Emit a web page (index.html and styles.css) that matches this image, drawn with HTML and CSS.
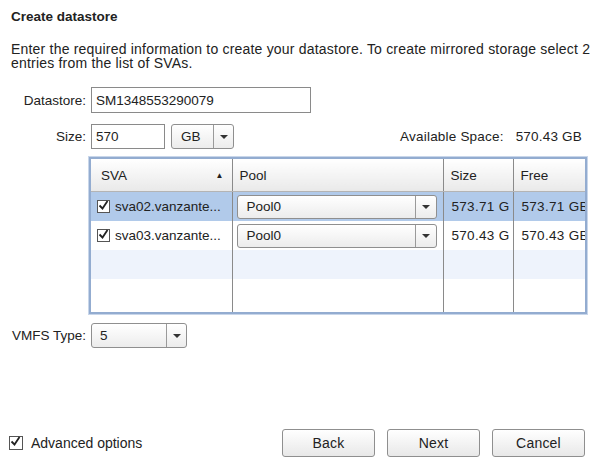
FILE: index.html
```html
<!DOCTYPE html>
<html>
<head>
<meta charset="utf-8">
<link rel="stylesheet" href="styles.css">
</head>
<body>
<div class="page">
  <h1 class="title">Create datastore</h1>
  <p class="desc">Enter the required information to create your datastore. To create mirrored storage select 2 entries from the list of SVAs.</p>

  <div class="row row-ds">
    <label class="lbl">Datastore:</label>
    <div class="input input-ds">SM1348553290079</div>
  </div>

  <div class="row row-size">
    <label class="lbl">Size:</label>
    <div class="input input-size">570</div>
    <div class="combo combo-gb"><span class="combo-text">GB</span><span class="combo-btn"><span class="arrow"></span></span></div>
    <div class="avail">Available Space:<span class="avail-val">570.43 GB</span></div>
  </div>

  <div class="grid-wrap">
    <table class="grid">
      <colgroup>
        <col class="c-sva"><col class="c-pool"><col class="c-size"><col class="c-free">
      </colgroup>
      <thead>
        <tr>
          <th><div class="th-in"><span>SVA</span><span class="sort">&#9650;</span></div></th>
          <th>Pool</th>
          <th>Size</th>
          <th>Free</th>
        </tr>
      </thead>
      <tbody>
        <tr class="sel">
          <td><span class="cb"><svg viewBox="0 0 13 13" width="13" height="13"><path d="M2.5 6.5 L5.5 9.5 L10.5 2" fill="none" stroke="#222" stroke-width="1.8"/></svg></span>sva02.vanzante...</td>
          <td><div class="combo combo-pool"><span class="combo-text">Pool0</span><span class="combo-btn"><span class="arrow"></span></span></div></td>
          <td class="num">573.71 G</td>
          <td class="num">573.71 GB</td>
        </tr>
        <tr>
          <td><span class="cb"><svg viewBox="0 0 13 13" width="13" height="13"><path d="M2.5 6.5 L5.5 9.5 L10.5 2" fill="none" stroke="#222" stroke-width="1.8"/></svg></span>sva03.vanzante...</td>
          <td><div class="combo combo-pool"><span class="combo-text">Pool0</span><span class="combo-btn"><span class="arrow"></span></span></div></td>
          <td class="num">570.43 G</td>
          <td class="num">570.43 GB</td>
        </tr>
        <tr class="alt"><td></td><td></td><td></td><td></td></tr>
        <tr class="fill"><td></td><td></td><td></td><td></td></tr>
      </tbody>
    </table>
  </div>

  <div class="row row-vmfs">
    <label class="lbl-vmfs">VMFS Type:</label>
    <div class="combo combo-vmfs"><span class="combo-text">5</span><span class="combo-btn"><span class="arrow"></span></span></div>
  </div>

  <div class="footer">
    <label class="adv"><span class="cb"><svg viewBox="0 0 13 13" width="13" height="13"><path d="M2.5 6.5 L5.5 9.5 L10.5 2" fill="none" stroke="#222" stroke-width="1.8"/></svg></span>Advanced options</label>
    <div class="buttons">
      <button class="btn">Back</button>
      <button class="btn">Next</button>
      <button class="btn">Cancel</button>
    </div>
  </div>
</div>
</body>
</html>
```

FILE: styles.css
```css
html, body {
  margin: 0;
  padding: 0;
  background: #ffffff;
}
body {
  font-family: "Liberation Sans", Arial, sans-serif;
  font-size: 13.5px;
  color: #222;
  width: 600px;
  height: 466px;
  overflow: hidden;
}
.page {
  padding: 8px 10px 0 11px;
  position: relative;
  height: 466px;
  box-sizing: border-box;
}
.title {
  font-size: 13.5px;
  font-weight: bold;
  margin: 0;
  line-height: 17px;
}
.desc {
  margin: 17px 0 0 0;
  font-size: 14px;
  letter-spacing: 0.2px;
  line-height: 14px;
  width: 585px;
}
.row {
  display: flex;
  align-items: center;
}
.row-ds {
  margin-top: 17px;
  height: 26px;
}
.lbl {
  width: 75px;
  text-align: right;
  margin-right: 5px;
}
.input {
  border: 1px solid #8a8a8a;
  box-sizing: border-box;
  background: #fff;
  padding-left: 4px;
  display: flex;
  align-items: center;
}
.input-ds {
  width: 220px;
  height: 26px;
}
.row-size {
  margin-top: 11px;
  height: 25px;
}
.input-size {
  width: 74px;
  height: 25px;
}
.combo {
  display: flex;
  box-sizing: border-box;
  border: 1px solid #8f8f8f;
  border-radius: 3px;
  background: linear-gradient(#ffffff, #ececec);
  align-items: stretch;
}
.combo-text {
  flex: 1;
  display: flex;
  align-items: center;
  padding-left: 9px;
}
.combo-btn {
  width: 19px;
  border-left: 1px solid #9a9a9a;
  display: flex;
  align-items: center;
  justify-content: center;
}
.arrow {
  width: 0;
  height: 0;
  border-left: 4px solid transparent;
  border-right: 4px solid transparent;
  border-top: 4px solid #333;
}
.combo-gb {
  width: 63px;
  height: 25px;
  margin-left: 6px;
}
.combo-gb .combo-text {
  padding-left: 9px;
}
.avail {
  margin-left: auto;
  margin-right: 8px;
  letter-spacing: 0.2px;
}
.avail-val {
  margin-left: 12px;
}
.grid-wrap {
  margin: 8px 0 0 78px;
  width: 498px;
  height: 157px;
  box-sizing: border-box;
  border: 2px solid #93acd0;
  box-shadow: 0 0 0 1px #c8d6ea;
  overflow: hidden;
  background: #fff;
}
.grid {
  border-collapse: collapse;
  table-layout: fixed;
  width: 494px;
  height: 153px;
}
.c-sva { width: 141px; }
.c-pool { width: 211px; }
.c-size { width: 70px; }
.c-free { width: 72px; }
.grid th {
  height: 32px;
  font-weight: normal;
  text-align: left;
  padding: 0 0 0 7px;
  background: linear-gradient(#ffffff, #e9e9e9);
  border-right: 1px solid #8a8a8a;
  border-bottom: 1px solid #b4b4b4;
  white-space: nowrap;
}
.grid th:first-child {
  padding-left: 10px;
  padding-right: 8px;
}
.th-in {
  display: flex;
  justify-content: space-between;
  align-items: center;
}
.sort {
  font-size: 8px;
  color: #222;
}
.grid th:last-child, .grid td:last-child {
  border-right: none;
}
.grid td {
  height: 29px;
  padding: 0 0 0 4px;
  border-right: 1px solid #8a8a8a;
  white-space: nowrap;
  overflow: hidden;
  vertical-align: middle;
}
.grid td:first-child {
  padding-left: 6px;
}
.grid tr.sel td {
  background: #b1caea;
}
.grid tr.alt td {
  background: #eef3fc;
}
.grid tr.fill td {
  height: auto;
}
.grid td.num {
  padding-left: 8px;
  letter-spacing: 0.3px;
  text-overflow: clip;
}
.cb {
  display: inline-block;
  width: 13px;
  height: 13px;
  box-sizing: border-box;
  border: 1px solid #555;
  background: #fff;
  vertical-align: -2px;
  margin-right: 5px;
  position: relative;
}
.cb svg {
  position: absolute;
  left: -1px;
  top: -2px;
}
.combo-pool {
  width: 200px;
  height: 24px;
}
.combo-pool .combo-btn {
  width: 20px;
}
.row-vmfs {
  margin-top: 9px;
  height: 25px;
}
.lbl-vmfs {
  width: 77px;
  margin-left: 1px;
  margin-right: 2px;
}
.combo-vmfs {
  width: 96px;
  height: 25px;
}
.combo-vmfs .combo-text {
  padding-left: 8px;
}
.footer {
  position: absolute;
  left: 9px;
  right: 15px;
  top: 429px;
  display: flex;
  align-items: center;
  height: 28px;
  font-size: 14px;
}
.adv {
  display: flex;
  align-items: center;
}
.adv .cb {
  width: 14px;
  height: 14px;
  margin-right: 8px;
}
.buttons {
  margin-left: auto;
  display: flex;
  gap: 12px;
}
.btn {
  width: 93px;
  height: 28px;
  border: 1px solid #8f8f8f;
  border-radius: 3px;
  background: linear-gradient(#ffffff, #e8e8e8);
  font-family: "Liberation Sans", Arial, sans-serif;
  font-size: 14px;
  letter-spacing: 0.2px;
  color: #222;
  padding: 0;
}
```
